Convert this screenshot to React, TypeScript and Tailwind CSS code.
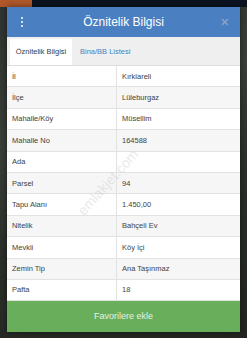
import { X } from "lucide-react";

const ROWS: [string, string][] = [
  ["İl", "Kırklareli"],
  ["İlçe", "Lüleburgaz"],
  ["Mahalle/Köy", "Müsellim"],
  ["Mahalle No", "164588"],
  ["Ada", ""],
  ["Parsel", "94"],
  ["Tapu Alanı", "1.450,00"],
  ["Nitelik", "Bahçeli Ev"],
  ["Mevkii", "Köy İçi"],
  ["Zemin Tip", "Ana Taşınmaz"],
  ["Pafta", "18"],
];

export default function App() {
  return (
    <div
      className="relative w-[247px] h-[338px] overflow-hidden bg-[linear-gradient(160deg,#2e3330_0%,#3a3f37_35%,#2b2f2a_60%,#23261f_100%)] pt-[7px] pl-[7px]"
      style={{ fontFamily: '"Liberation Sans", Arial, sans-serif' }}
    >
      {/* map strip at the top */}
      <div className="absolute left-0 top-0 w-full h-[7px] bg-[#0c1320]" />
      <div className="absolute left-0 top-0 w-[32px] h-[7px] bg-[#b0582a]" />

      <div className="relative flex flex-col w-[233px] h-[325px] bg-white shadow-[0_0_6px_rgba(0,0,0,0.5)]">
        <div className="flex items-center h-[30px] bg-[#4a7fc2] px-[7px]">
          <div className="flex flex-col items-center gap-[1.5px] w-[16px]">
            <span className="block w-[2.5px] h-[2.5px] rounded-full bg-white" />
            <span className="block w-[2.5px] h-[2.5px] rounded-full bg-white" />
            <span className="block w-[2.5px] h-[2.5px] rounded-full bg-white" />
          </div>
          <div className="flex-1 text-center text-white text-[12px] leading-none">
            Öznitelik Bilgisi
          </div>
          <div className="flex justify-center w-[16px]">
            <X size={10} strokeWidth={3.2} className="text-[#8fa3c4]" />
          </div>
        </div>

        <div className="flex items-end h-[29px] bg-[#efefef] pl-[3px] border-b border-[#dedede]">
          <div className="flex items-center justify-center w-[62px] h-[26px] bg-white text-[7.5px] text-[#3a3a3a]">
            Öznitelik Bilgisi
          </div>
          <div className="flex items-center h-[26px] pl-[8px] text-[7.5px] text-[#4a7fc2]">
            Bina/BB Listesi
          </div>
        </div>

        <div className="flex flex-col">
          {ROWS.map(([k, v], i) => (
            <div
              key={k}
              className={`flex h-[21.4px] border-b border-[#e2e2e2] text-[7.5px] text-[#3f3f3f] ${
                i % 2 === 1 ? "bg-[#f6f6f6]" : "bg-white"
              }`}
            >
              <div className="flex items-center w-[110px] pl-[5px] border-r border-[#e2e2e2]">
                {k}
              </div>
              <div className="flex items-center pl-[5px]">{v}</div>
            </div>
          ))}
        </div>

        <div className="flex items-center justify-center flex-1 bg-[#69ae5b] text-[9px] text-[#e6f2e2]">
          Favorilere ekle
        </div>

        {/* watermark */}
        <div className="absolute left-[60px] top-[165px] -rotate-[48deg] text-[14px] text-[#c4c4c4] opacity-35 pointer-events-none select-none">
          emlakjet.com
        </div>
      </div>
    </div>
  );
}
